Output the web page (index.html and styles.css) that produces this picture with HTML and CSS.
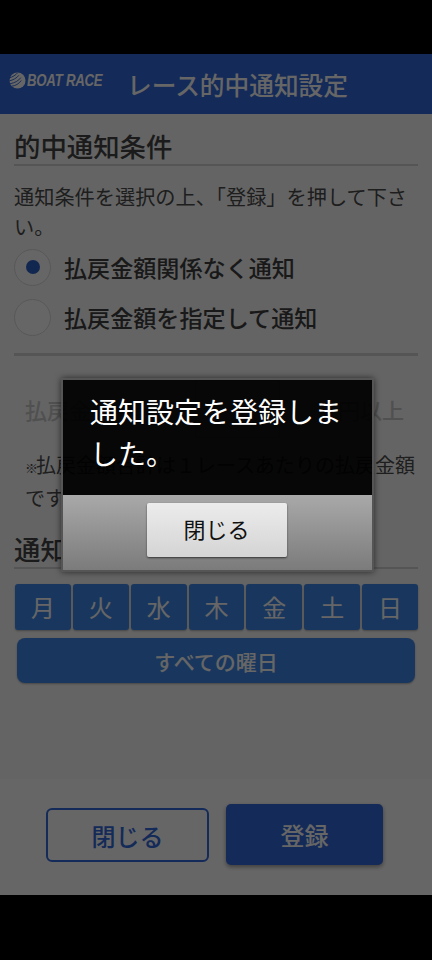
FILE: index.html
```html
<!DOCTYPE html>
<html lang="ja">
<head>
<meta charset="utf-8">
<title>レース的中通知設定</title>
<link rel="stylesheet" href="styles.css">
</head>
<body>
<div class="screen">
  <div class="sysbar-top"></div>
  <header class="appbar">
    <div class="logo">
      <svg class="logo-mark" viewBox="0 0 18 18" width="17" height="17" aria-hidden="true">
        <circle cx="9" cy="9" r="8.500" fill="#fff"/>
        <path d="M0 6.500C4 5 7 3.500 9 1M0 9.500C4.500 8.500 8 6.500 10.500 3.500M1 12.500C6 11.500 10 9.500 12.500 6M3 15C7 14.500 10.500 12.500 13 9" fill="none" stroke="#3369dc" stroke-width="1"/>
      </svg>
      <span class="logo-text">BOAT RACE</span>
    </div>
    <h1 class="appbar-title">レース的中通知設定</h1>
  </header>
  <main class="content">
    <h2 class="section-head">的中通知条件</h2>
    <p class="lead">通知条件を選択の上、「登録」を押して下さい。</p>
    <div class="radio-row"><span class="radio is-on"></span><span class="radio-label">払戻金額関係なく通知</span></div>
    <div class="radio-row"><span class="radio"></span><span class="radio-label">払戻金額を指定して通知</span></div>
    <hr class="rule">
    <div class="amount-row"><span>払戻金額合計</span><span class="amount-box"></span><span class="amount-unit">円以上</span></div>
    <p class="note"><span class="note-mark">※</span>払戻金額合計は１レースあたりの払戻金額です。</p>
    <h2 class="section-head section-head-days">通知曜日</h2>
    <div class="days">
      <button class="day">月</button><button class="day">火</button><button class="day">水</button><button class="day">木</button><button class="day">金</button><button class="day">土</button><button class="day">日</button>
    </div>
    <button class="all-days">すべての曜日</button>
  </main>
  <footer class="actions">
    <button class="btn-outline">閉じる</button>
    <button class="btn-solid">登録</button>
  </footer>
  <div class="sysbar-bottom"></div>

  <div class="scrim"></div>
  <div class="dialog" role="dialog">
    <div class="dialog-body">通知設定を登録しました。</div>
    <div class="dialog-foot"><button class="dialog-btn">閉じる</button></div>
  </div>
</div>
</body>
</html>
```
FILE: styles.css
```css
* { box-sizing: border-box; }
html, body { margin: 0; padding: 0; }
body { font-family: "Noto Sans CJK JP", "Noto Sans", sans-serif; color: #333; background: #000; }
button { font-family: inherit; padding: 0; cursor: pointer; }
h1, h2, p { margin: 0; font-weight: 400; }

.screen { position: relative; width: 432px; height: 960px; display: flex; flex-direction: column; overflow: hidden; background: #fff; }
.sysbar-top { height: 54px; background: #000; flex: none; }
.sysbar-bottom { height: 65px; background: #000; flex: none; }

.appbar { height: 60px; flex: none; display: flex; align-items: center; background: #3369dc; color: #fff; padding-left: 9px; }
.logo { display: flex; align-items: center; gap: 1px; width: 118px; flex: none; margin-bottom: 7px; }
.logo-mark { flex: none; }
.logo-text { font-family: "Liberation Sans", sans-serif; font-weight: 700; font-style: italic; font-size: 16.500px; letter-spacing: -0.300px; white-space: nowrap; transform: scaleX(.8); transform-origin: left center; }
.appbar-title { font-size: 24.700px; line-height: 1; font-weight: 500; white-space: nowrap; }

.content { flex: 1; min-height: 0; padding: 14px 14px 0; background: #fafafa; }
.section-head { font-size: 26.400px; line-height: 36px; font-weight: 500; border-bottom: 2px solid #d4d4d4; height: 38px; color: #444; }
.lead { font-size: 20.200px; line-height: 30px; margin-top: 16px; width: 404px; color: #4c4c4c; }
.radio-row { display: flex; align-items: center; height: 50px; }
.radio { width: 37px; height: 37px; border-radius: 50%; background: #fff; border: 1.500px solid #dcdcdc; flex: none; display: flex; align-items: center; justify-content: center; margin-right: 13px; }
.radio.is-on::after { content: ""; width: 14px; height: 14px; border-radius: 50%; background: #2f62c8; }
.radio-label { font-size: 23.100px; font-weight: 500; color: #404040; }
.rule { border: 0; height: 3px; background: #d4d4d4; margin: 11px 0 0; }

.amount-row { display: flex; align-items: center; height: 58px; margin-top: 24px; padding: 0 14px 0 11px; font-size: 22px; font-weight: 500; color: #c8c8c8; }
.amount-box { width: 85px; height: 58px; margin-left: 38px; border: 1px solid #ccc; border-radius: 3px; }
.amount-unit { margin-left: auto; }
.note { font-size: 20px; line-height: 30px; margin-top: 12px; padding: 0 0 0 11px; color: #4c4c4c; width: 404px; }
.note-mark { font-size: 13px; letter-spacing: -2px; }
.section-head-days { margin-top: 18px; }

.days { display: flex; gap: 2px; margin-top: 15px; padding-left: 1px; }
.day { width: 56px; height: 46px; border: 0; border-radius: 3px; background: #3f8aeb; color: #fff; font-size: 24px; line-height: 1; box-shadow: 0 1px 2px rgba(0,0,0,.3); }
.all-days { display: block; width: 398px; height: 45px; margin: 8px 0 0 3px; border: 0; border-radius: 8px; background: #3f8aeb; color: #fff; font-size: 21px; font-weight: 500; box-shadow: 0 1px 2px rgba(0,0,0,.3); }

.actions { height: 116px; flex: none; background: #fff; display: flex; align-items: center; padding: 0 0 5px 46px; gap: 17px; }
.btn-outline { width: 163px; height: 54px; margin-top: 1px; border: 2px solid #3369dc; border-radius: 6px; background: #fff; color: #3369dc; font-size: 24px; font-weight: 500; }
.btn-solid { width: 157px; height: 61px; border: 0; border-radius: 5px; background: #3369dc; color: #fff; font-size: 24px; font-weight: 500; box-shadow: 0 2px 4px rgba(0,0,0,.4); }

.scrim { position: absolute; inset: 0; background: rgba(0,0,0,.6); }
.dialog { position: absolute; left: 61px; top: 378px; width: 313px; height: 194px; display: flex; flex-direction: column; border: 2px solid #555; border-radius: 2px; box-shadow: 0 0 6px rgba(0,0,0,.6); }
.dialog-body { height: 115px; background: rgba(0,0,0,.93); color: #fff; font-size: 28px; line-height: 42px; padding: 10px 27px 0 27px; flex: none; }
.dialog-foot { flex: 1; display: flex; justify-content: center; align-items: flex-start; padding: 8px 2px 0 0; background: linear-gradient(#a9a9a9, #7b7b7b); }
.dialog-btn { width: 140px; height: 54px; padding-bottom: 5px; border: 0; border-radius: 2px; background: linear-gradient(#ececec, #d4d4d4); color: #111; font-size: 22px; box-shadow: 0 1px 2px rgba(0,0,0,.6); }
```
